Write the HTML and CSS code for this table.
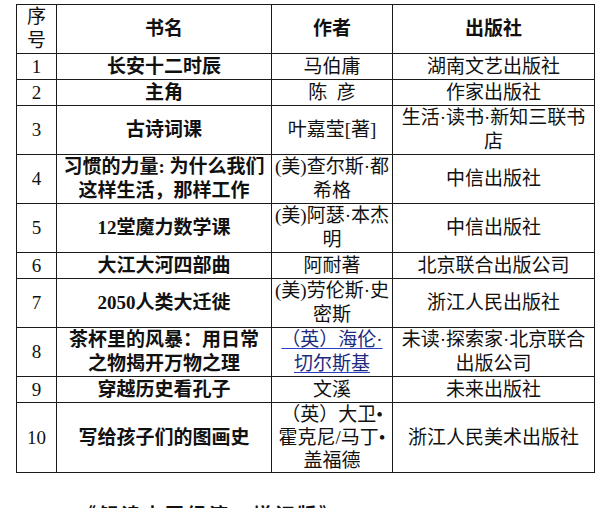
FILE: index.html
```html
<!DOCTYPE html>
<html lang="zh-CN">
<head>
<meta charset="utf-8">
<title>书单</title>
<link rel="stylesheet" href="styles.css">
</head>
<body>
<table class="books">
  <colgroup>
    <col class="c-no">
    <col class="c-title">
    <col class="c-author">
    <col class="c-pub">
  </colgroup>
  <thead>
    <tr>
      <th class="no-head">序<br>号</th>
      <th>书名</th>
      <th>作者</th>
      <th>出版社</th>
    </tr>
  </thead>
  <tbody>
    <tr><td class="no">1</td><td class="title">长安十二时辰</td><td>马伯庸</td><td>湖南文艺出版社</td></tr>
    <tr><td class="no">2</td><td class="title">主角</td><td>陈&nbsp;&nbsp;彦</td><td>作家出版社</td></tr>
    <tr><td class="no">3</td><td class="title">古诗词课</td><td>叶嘉莹[著]</td><td>生活·读书·新知三联书<br>店</td></tr>
    <tr><td class="no">4</td><td class="title">习惯的力量: 为什么我们<br>这样生活，那样工作</td><td>(美)查尔斯·都<br>希格</td><td>中信出版社</td></tr>
    <tr><td class="no">5</td><td class="title">12堂魔力数学课</td><td>(美)阿瑟·本杰<br>明</td><td>中信出版社</td></tr>
    <tr><td class="no">6</td><td class="title">大江大河四部曲</td><td>阿耐著</td><td>北京联合出版公司</td></tr>
    <tr><td class="no">7</td><td class="title">2050人类大迁徙</td><td>(美)劳伦斯·史<br>密斯</td><td>浙江人民出版社</td></tr>
    <tr><td class="no">8</td><td class="title">茶杯里的风暴：用日常<br>之物揭开万物之理</td><td><a class="link" href="#">（英）海伦·<br>切尔斯基</a></td><td>未读·探索家·北京联合<br>出版公司</td></tr>
    <tr><td class="no">9</td><td class="title">穿越历史看孔子</td><td>文溪</td><td>未来出版社</td></tr>
    <tr class="tall"><td class="no">10</td><td class="title">写给孩子们的图画史</td><td>（英）大卫•<br>霍克尼/马丁•<br>盖福德</td><td>浙江人民美术出版社</td></tr>
  </tbody>
</table>
<p class="next">《解读中国经济：增订版》</p>
</body>
</html>
```

FILE: styles.css
```css
html, body {
  margin: 0;
  padding: 0;
  background: #ffffff;
}

body {
  padding: 4px 6px 0 16px;
  font-family: "Liberation Serif", "Noto Sans CJK SC", sans-serif;
  font-size: 19px;
  color: #111111;
}

.books {
  border-collapse: collapse;
  table-layout: fixed;
  width: 578px;
}

.c-no { width: 40px; }
.c-title { width: 215px; }
.c-author { width: 121px; }
.c-pub { width: 202px; }

.books tr {
  height: 26px;
}

.books th,
.books td {
  border: 1px solid #1a1a1a;
  padding: 0 1px;
  text-align: center;
  vertical-align: middle;
  line-height: 24px;
  font-weight: 400;
  white-space: nowrap;
  overflow: hidden;
}

.books th {
  font-weight: 700;
}

.books th.no-head {
  font-weight: 400;
}

.books td.title {
  font-weight: 700;
}

.books tr.tall td {
  line-height: 23px;
}

.link {
  color: #1c2a80;
  text-decoration: underline;
  text-decoration-color: #2b3fc0;
  text-underline-offset: 2px;
}

.next {
  margin: 31px 0 0 61px;
  font-weight: 700;
  line-height: 23px;
  letter-spacing: 3px;
}
```
